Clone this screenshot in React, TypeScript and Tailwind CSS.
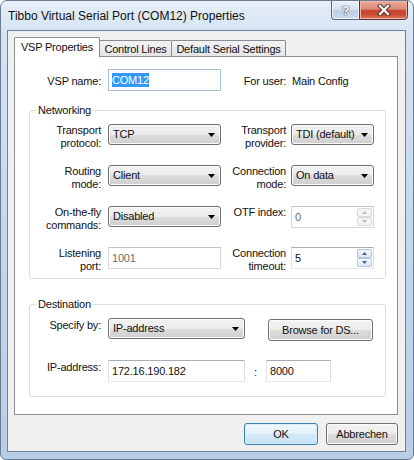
import React from "react";

const F = "font-['Liberation_Sans',Arial,sans-serif]";

function DropArrow() {
  return (
    <svg width="7" height="4" viewBox="0 0 7 4" className="shrink-0">
      <path d="M0 0H7L3.5 4Z" fill="#000" />
    </svg>
  );
}

function Select({ value, className }: { value: string; className: string }) {
  return (
    <div
      className={`${className} h-[21px] shrink-0 flex items-center justify-between rounded-[3px] border border-[#707070] bg-[linear-gradient(to_bottom,#f2f2f2_0%,#ebebeb_50%,#dddddd_50%,#cfcfcf_100%)] shadow-[inset_0_0_0_1px_#fbfbfb] pl-[4px] pr-[5px] leading-[13px]`}
    >
      <span>{value}</span>
      <DropArrow />
    </div>
  );
}

function TextBox({
  className,
  children,
  tone = "normal",
}: {
  className: string;
  children: React.ReactNode;
  tone?: "normal" | "focus" | "disabled";
}) {
  const border =
    tone === "focus"
      ? "border-[#a9c0da]"
      : tone === "disabled"
      ? "border-[#d9d9d9] border-t-[#c6c6c6] text-[#6d6d6d]"
      : "border-[#e3e9ef] border-t-[#abadb3] border-l-[#e2e3ea] border-r-[#dbdfe6]";
  return (
    <div className={`${className} ${border} h-[22px] shrink-0 flex items-center bg-white border pl-[3px] leading-[13px]`}>
      {children}
    </div>
  );
}

function SpinArrow({ up, color }: { up?: boolean; color: string }) {
  return (
    <svg width="5" height="3" viewBox="0 0 5 3">
      <path d={up ? "M0 3H5L2.5 0Z" : "M0 0H5L2.5 3Z"} fill={color} />
    </svg>
  );
}

function SpinBox({ value, disabled }: { value: string; disabled?: boolean }) {
  const btn = disabled
    ? "border-[#dadada] bg-[#f4f4f4]"
    : "border-[#b3c6dd] bg-[linear-gradient(to_bottom,#f4f8fc,#dbe6f3)]";
  const arrow = disabled ? "#bdbdbd" : "#4a5f7c";
  return (
    <div
      className={`w-[83px] h-[22px] shrink-0 flex bg-white border ${
        disabled
          ? "border-[#d9d9d9] border-t-[#c6c6c6] text-[#6d6d6d]"
          : "border-[#e3e9ef] border-t-[#abadb3] border-l-[#e2e3ea] border-r-[#dbdfe6]"
      }`}
    >
      <span className="flex-1 pl-[3px] pt-[4px] leading-[13px]">{value}</span>
      <div className="w-[17px] flex flex-col p-[1px]">
        <div className={`flex-1 border rounded-[2px] flex items-center justify-center ${btn}`}>
          <SpinArrow up color={arrow} />
        </div>
        <div className={`flex-1 border rounded-[2px] flex items-center justify-center ${btn}`}>
          <SpinArrow color={arrow} />
        </div>
      </div>
    </div>
  );
}

function Button({ children, className, def }: { children: React.ReactNode; className: string; def?: boolean }) {
  return (
    <div
      className={`${className} h-[22px] flex items-center justify-center rounded-[3px] border leading-[13px] ${
        def
          ? "border-[#3c7fb1] bg-[linear-gradient(to_bottom,#f1f8fd_0%,#e3f1fb_50%,#d3e9f8_50%,#c8e2f5_100%)] shadow-[inset_0_0_0_1px_#d9eefa]"
          : "border-[#707070] bg-[linear-gradient(to_bottom,#f2f2f2_0%,#ebebeb_50%,#dddddd_50%,#cfcfcf_100%)] shadow-[inset_0_0_0_1px_#fbfbfb]"
      }`}
    >
      {children}
    </div>
  );
}

function Label({ children, className = "" }: { children: React.ReactNode; className?: string }) {
  return <div className={`text-right leading-[13px] shrink-0 ${className}`}>{children}</div>;
}

function Row({ children }: { children: React.ReactNode }) {
  return <div className="flex items-start">{children}</div>;
}

export default function App() {
  return (
    <div className={`${F} w-[414px] h-[460px] bg-white text-[11px] text-[#111] tracking-[-0.2px]`}>
      <div className="h-full flex flex-col rounded-t-[7px] rounded-b-[6px] border border-[#6b7c91] bg-[linear-gradient(to_bottom,#e6eff9_0px,#d6e4f3_30px,#c6d9ed_200px,#b8cee6_100%)] overflow-hidden">
        {/* Title bar */}
        <div className="h-[29px] shrink-0 flex items-start">
          <div className="flex-1 pl-[7px] pt-[7px] text-[12px] leading-[16px] tracking-normal">
            Tibbo Virtual Serial Port (COM12) Properties
          </div>
          <div className="flex mr-[5px] -mt-[1px]">
            <div className="w-[28px] h-[20px] flex items-center justify-center border border-r-0 border-[#58697f] rounded-bl-[4px] bg-[linear-gradient(to_bottom,#eaf1f9_0%,#d3e0ee_50%,#bccee3_50%,#cadbee_100%)] shadow-[inset_0_0_0_1px_#f2f6fb]">
              <span className="text-[13px] font-bold leading-none text-white [text-shadow:0_0_1px_#3a4656,0_0_1px_#3a4656,0_0_1px_#3a4656]">?</span>
            </div>
            <div className="w-[49px] h-[20px] flex items-center justify-center border border-[#5b3434] rounded-br-[4px] bg-[linear-gradient(to_bottom,#e9ab9c_0%,#dc8a79_45%,#c7472f_52%,#c64a31_75%,#dd7a5e_100%)] shadow-[inset_0_0_0_1px_#eeb4a6]">
              <svg width="14" height="12" viewBox="0 0 14 12">
                <path d="M3 2L11 10M11 2L3 10" stroke="#4a2323" strokeWidth="4.2" strokeLinecap="square" />
                <path d="M3 2L11 10M11 2L3 10" stroke="#ffffff" strokeWidth="2.4" strokeLinecap="square" />
              </svg>
            </div>
          </div>
        </div>

        {/* Client area */}
        <div className="flex-1 flex flex-col pl-[6px] pr-[7px] pb-[7px]">
          <div className="flex-1 flex flex-col border border-[#6e8196] bg-[#f0f0f0] pt-[6px] pl-[6px] pr-[7px]">
            {/* Tabs */}
            <div className="flex items-end h-[19px] relative z-10">
              <div className="w-[86px] h-[20px] -mb-[1px] bg-white border border-b-0 border-[#898c95] rounded-t-[2px] flex justify-center pt-[3px] leading-[13px]">
                VSP Properties
              </div>
              <div className="w-[72px] h-[16px] border border-b-0 border-l-0 border-[#898c95] rounded-tr-[2px] bg-[linear-gradient(to_bottom,#f3f3f3,#e5e5e5)] flex justify-center pt-[2px] leading-[13px]">
                Control Lines
              </div>
              <div className="w-[114px] h-[16px] border border-b-0 border-l-0 border-[#898c95] rounded-tr-[2px] bg-[linear-gradient(to_bottom,#f3f3f3,#e5e5e5)] flex justify-center pt-[2px] leading-[13px]">
                Default Serial Settings
              </div>
            </div>

            {/* Panel */}
            <div className="h-[359px] shrink-0 border border-[#898c95] bg-white flex flex-col pt-[12px]">
              {/* VSP name row */}
              <div className="flex items-start pl-[15px]">
                <Label className="w-[71px] mt-[6px]">VSP name:</Label>
                <TextBox className="w-[113px] ml-[7px]" tone="focus">
                  <span className="bg-[#3399ff] text-white leading-[14px]">COM12</span>
                </TextBox>
                <Label className="w-[65px] mt-[6px]">For user:</Label>
                <div className="ml-[6px] mt-[6px] leading-[13px]">Main Config</div>
              </div>

              {/* Networking */}
              <fieldset className="ml-[14px] mr-[11px] mt-[13px] border border-[#d5dfe5] rounded-[3px]">
                <legend className="ml-[6px] px-[2px] leading-[13px]">Networking</legend>
                <div className="flex flex-col gap-[15px] pt-[7px] pb-[5px]">
                  <Row>
                    <Label className="w-[71px]">Transport<br />protocol:</Label>
                    <Select value="TCP" className="w-[113px] ml-[7px]" />
                    <Label className="w-[65px]">Transport<br />provider:</Label>
                    <Select value="TDI (default)" className="w-[83px] ml-[5px]" />
                  </Row>
                  <Row>
                    <Label className="w-[71px]">Routing<br />mode:</Label>
                    <Select value="Client" className="w-[113px] ml-[7px]" />
                    <Label className="w-[65px]">Connection<br />mode:</Label>
                    <Select value="On data" className="w-[83px] ml-[5px]" />
                  </Row>
                  <Row>
                    <Label className="w-[71px]">On-the-fly<br />commands:</Label>
                    <Select value="Disabled" className="w-[113px] ml-[7px]" />
                    <Label className="w-[65px]">OTF index:</Label>
                    <div className="ml-[5px]">
                      <SpinBox value="0" disabled />
                    </div>
                  </Row>
                  <Row>
                    <Label className="w-[71px]">Listening<br />port:</Label>
                    <TextBox className="w-[113px] ml-[7px]" tone="disabled">1001</TextBox>
                    <Label className="w-[65px]">Connection<br />timeout:</Label>
                    <div className="ml-[5px]">
                      <SpinBox value="5" />
                    </div>
                  </Row>
                </div>
              </fieldset>

              {/* Destination */}
              <fieldset className="ml-[14px] mr-[11px] mt-[19px] border border-[#d5dfe5] rounded-[3px]">
                <legend className="ml-[6px] px-[2px] leading-[13px]">Destination</legend>
                <div className="flex flex-col gap-[19px] pt-[7px] pb-[14px]">
                  <Row>
                    <Label className="w-[71px] mt-[1px]">Specify by:</Label>
                    <Select value="IP-address" className="w-[137px] ml-[7px]" />
                    <Button className="w-[105px] ml-[23px] mt-[1px]">Browse for DS...</Button>
                  </Row>
                  <Row>
                    <Label className="w-[71px] mt-[1px]">IP-address:</Label>
                    <TextBox className="w-[137px] ml-[7px]">172.16.190.182</TextBox>
                    <div className="w-[11px] ml-[5px] mt-[6px] text-center leading-[13px]">:</div>
                    <TextBox className="w-[65px] ml-[5px]">8000</TextBox>
                  </Row>
                </div>
              </fieldset>
            </div>

            {/* Buttons */}
            <div className="flex justify-end gap-[8px] mt-[8px]">
              <Button className="w-[74px]" def>OK</Button>
              <Button className="w-[72px]">Abbrechen</Button>
            </div>
          </div>
        </div>
      </div>
    </div>
  );
}
